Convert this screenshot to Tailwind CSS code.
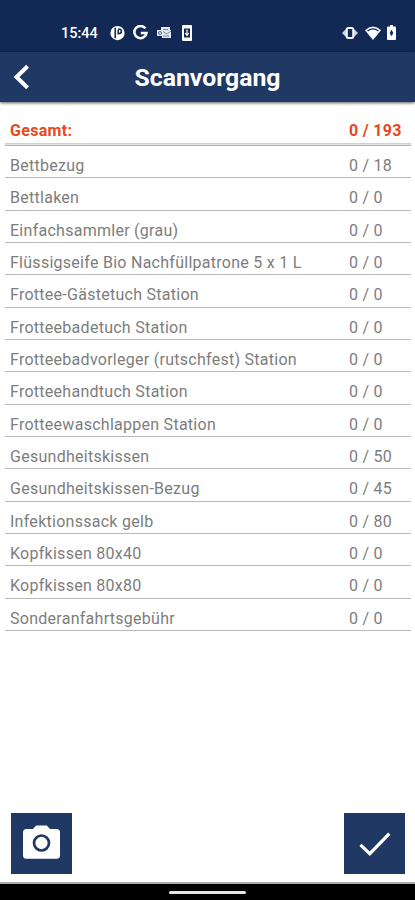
<!DOCTYPE html>
<html lang="de">
<head>
<meta charset="utf-8">
<title>Scanvorgang</title>
<script src="https://cdn.jsdelivr.net/npm/@tailwindcss/browser@4"></script>
</head>
<body class="bg-white">
<div class="w-[415px] h-[900px] flex flex-col overflow-hidden bg-white font-[Roboto,sans-serif]">
  <div class="h-[52px] shrink-0 bg-[#132955] text-white flex items-start justify-between pl-[61px] pr-[19px] pt-[24px]">
    <div class="flex items-center h-[18px]">
      <span class="text-[14.5px] font-medium w-[49px] leading-[19px] pt-px">15:44</span>
      <svg class="w-[15px] h-[16px]" viewBox="0 0 16 16"><circle cx="8" cy="8" r="7.600" fill="#fff"/><path d="M5.600 2.500v11M8.800 4.500v4.300q3.400 0 3.400-2.600T8.800 3.800" fill="none" stroke="#132955" stroke-width="1.700"/></svg>
      <svg class="w-[15px] h-[16px] ml-[8px]" viewBox="0 0 15 16"><path d="M12.400 3.500A6.100 6.100 0 1 0 13.500 8H7.800" fill="none" stroke="#fff" stroke-width="2.500"/></svg>
      <svg class="w-[16px] h-[16px] ml-[8px]" viewBox="0 0 16 16"><path d="M5 2h9v3h1v8H6v-2H1V5h4z" fill="#e4e8f0"/><path d="M7 4.500h5M7 6.500l4 2.500 4-3M7 11h6" fill="none" stroke="#7d89a3" stroke-width="1"/><circle cx="4" cy="8" r="1.500" fill="none" stroke="#5d6c8b"/></svg>
      <svg class="w-[10px] h-[16px] ml-[10px]" viewBox="0 0 10 16"><rect width="10" height="16" rx="1" fill="#fff"/><path d="M2 3.500h6v9H2z" fill="#132955"/><path d="M5 4.500v5M3.200 8l1.800 2.500L6.800 8" fill="none" stroke="#fff" stroke-width="1.200"/></svg>
    </div>
    <div class="flex items-center h-[17px]">
      <svg class="w-[16px] h-[12px]" viewBox="0 0 16 12"><path d="M0 6l4-4v8zM16 6l-4-4v8z" fill="#cfd5e2"/><rect x="4.800" y="1" width="6.400" height="10" rx="1.500" fill="#132955" stroke="#f4f6fa" stroke-width="2"/></svg>
      <svg class="w-[16px] h-[14px] ml-[7px]" viewBox="0 0 16 14"><path d="M0 4.200Q8-3.200 16 4.200L8 14z" fill="#fff"/><path d="M2.500 5Q8 .8 13.500 5" fill="none" stroke="#132955" stroke-width="1.200"/></svg>
      <svg class="w-[9px] h-[15px] ml-[6px]" viewBox="0 0 9 15"><path d="M0 2.500q0-1 1-1h2V0h3v1.500h2q1 0 1 1V14q0 1-1 1H1q-1 0-1-1z" fill="#fff"/><path d="M4.500 4.800L6.300 8 4.500 11.200 2.700 8z" fill="#132955"/></svg>
    </div>
  </div>
  <header class="relative h-[50px] shrink-0 bg-[#203864] flex items-center justify-center shadow-[0_1px_3px_rgba(0,0,0,0.65)]">
    <svg class="absolute left-[13px] top-[12px] w-[18px] h-[26px]" viewBox="0 0 18 26"><path d="M14.600 2.200L3.500 13l11.100 10.800" fill="none" stroke="#fff" stroke-width="4"/></svg>
    <h1 class="text-white text-[24.8px] font-bold leading-[50px] pt-px">Scanvorgang</h1>
  </header>
  <main class="grow pl-[5px] pr-[4px] pt-[16px] text-[#7d7d7d] text-[16px] tracking-[0.27px]">
    <div class="h-[26px] flex justify-between pl-[5px] pt-[3px] font-bold text-[#e8481c] tracking-[0.3px] border-b border-[#cfcfcf] leading-[20px]"><span>Gesamt:</span><span class="w-[62px]">0 / 193</span></div>
    <div class="h-px bg-[#e4e4e4]"></div>
    <div id="rows" class="border-t border-[#b4b4b4]"></div>
  </main>
  <div class="flex justify-between pl-[11px] pr-[10px] pb-[8px]">
    <button class="w-[61px] h-[61px] bg-[#203864] flex items-start justify-center pt-[12px]" aria-label="Kamera">
      <svg class="w-[37px] h-[34px]" viewBox="0 0 37 34"><path d="M3.500 4H10l3.200-3.500h10.600L27 4h6.500Q37 4 37 7.500v22.800q0 3.500-3.500 3.500h-30Q0 33.800 0 30.300V7.500Q0 4 3.500 4z" fill="#fff"/><circle cx="18.500" cy="18" r="7.500" fill="#fff" stroke="#203864" stroke-width="2.700"/></svg>
    </button>
    <button class="w-[61px] h-[61px] bg-[#203864] flex items-center justify-center" aria-label="Fertig">
      <svg class="w-[32px] h-[24px]" viewBox="0 0 32 24"><path d="M1.500 12.800l9.300 8.900L30.300 1.700" fill="none" stroke="#fff" stroke-width="3.200"/></svg>
    </button>
  </div>
  <footer class="h-[18px] shrink-0 bg-black border-t-2 border-[#aaa] flex justify-center pt-[7px]"><div class="w-[77px] h-[3px] rounded-full bg-[#e6e6e6]"></div></footer>
</div>
<script>
const rows = [["Bettbezug",18],["Bettlaken",0],["Einfachsammler (grau)",0],["Flüssigseife Bio Nachfüllpatrone 5 x 1 L",0],["Frottee-Gästetuch Station",0],["Frotteebadetuch Station",0],["Frotteebadvorleger (rutschfest) Station",0],["Frotteehandtuch Station",0],["Frotteewaschlappen Station",0],["Gesundheitskissen",50],["Gesundheitskissen-Bezug",45],["Infektionssack gelb",80],["Kopfkissen 80x40",0],["Kopfkissen 80x80",0],["Sonderanfahrtsgebühr",0]];
document.getElementById("rows").innerHTML = rows.map(([n, t]) => `<div class="h-[32.33px] flex justify-between pl-[5px] pt-[10px] leading-[20px] border-b border-[#b9b9b9]"><span>${n}</span><span class="w-[62px]">0 / ${t}</span></div>`).join("");
</script>
</body>
</html>
